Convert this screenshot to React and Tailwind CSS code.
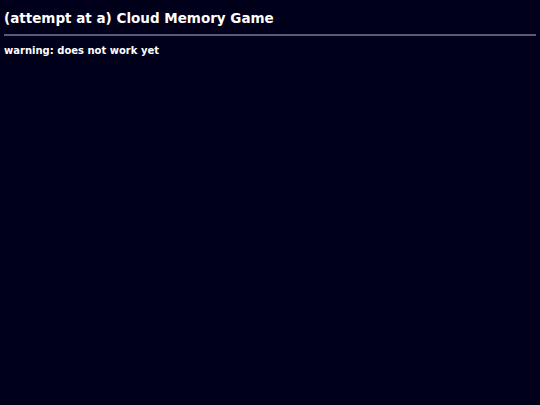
export default function App() {
  return (
    <div
      className="min-h-screen bg-[#00001a] text-white px-1 pt-[10px]"
      style={{ fontFamily: '"DejaVu Sans", Verdana, sans-serif' }}
    >
      <h1 className="text-[13.5px] font-bold leading-[16px]">(attempt at a) Cloud Memory Game</h1>
      <hr className="mt-[8px] border-t-2 border-[#5a5a78]" />
      <p className="mt-[9px] text-[10px] font-bold leading-[12px]">warning: does not work yet</p>
    </div>
  )
}
